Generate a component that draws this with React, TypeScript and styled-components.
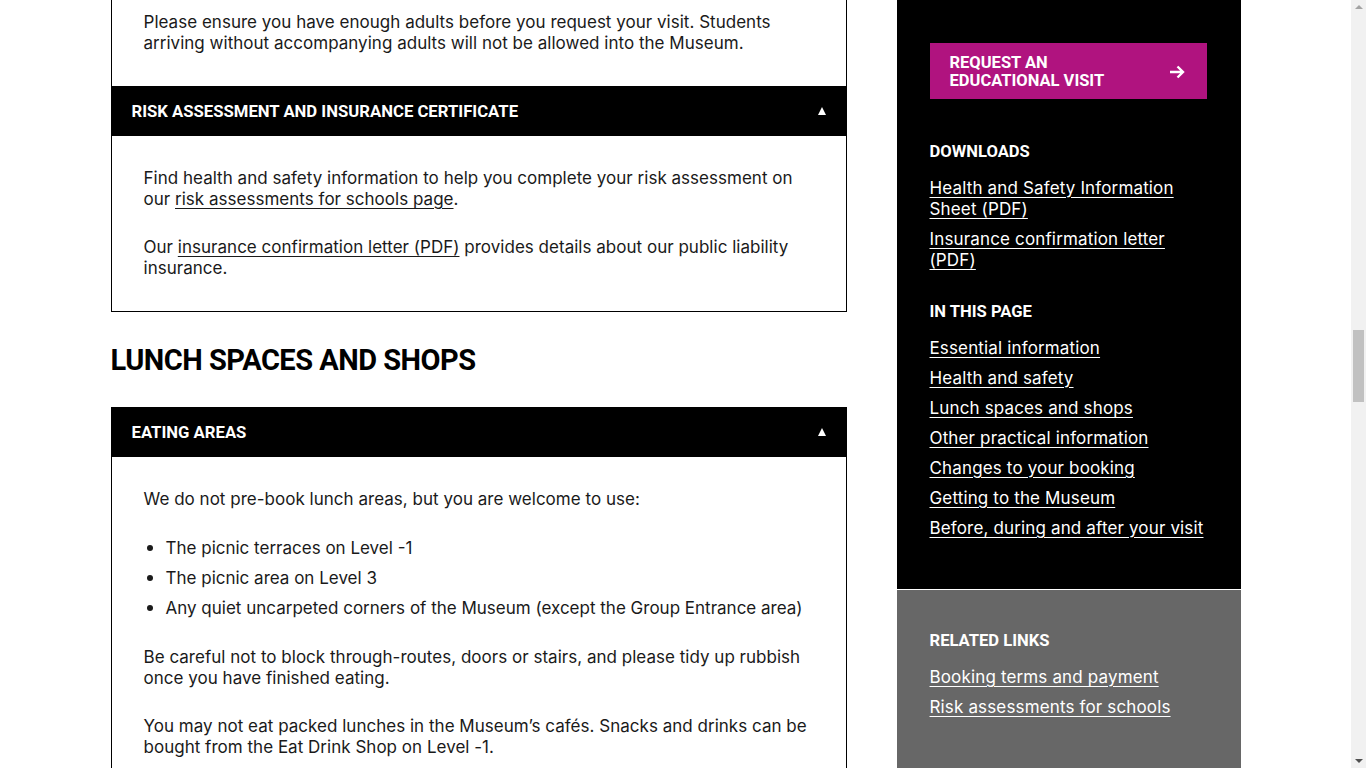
import styled, { createGlobalStyle } from 'styled-components';

const GlobalStyle = createGlobalStyle`
  body {
    margin: 0;
    padding-right: 15px;
    background: #fff;
    color: #1a1a1a;
    font-family: Inter, 'Noto Sans', 'Liberation Sans', sans-serif;
  }
  * {
    box-sizing: border-box;
  }
`;

const downloads = ['Health and Safety Information Sheet (PDF)', 'Insurance confirmation letter (PDF)'];

const pageLinks = [
  'Essential information',
  'Health and safety',
  'Lunch spaces and shops',
  'Other practical information',
  'Changes to your booking',
  'Getting to the Museum',
  'Before, during and after your visit',
];

const relatedLinks = ['Booking terms and payment', 'Risk assessments for schools'];

const lunchSpots = [
  'The picnic terraces on Level -1',
  'The picnic area on Level 3',
  'Any quiet uncarpeted corners of the Museum (except the Group Entrance area)',
];

export default function App() {
  return (
    <>
      <GlobalStyle />
      <StyledPage>
        <StyledMain>
          <StyledAccordion>
            <StyledPanel $cut>
              <StyledText>
                Please ensure you have enough adults before you request your visit. Students
                arriving without accompanying adults will not be allowed into the Museum.
              </StyledText>
            </StyledPanel>
            <AccordionHeader title="Risk assessment and insurance certificate" />
            <StyledPanel>
              <StyledText>
                Find health and safety information to help you complete your risk assessment on
                our <StyledInlineLink href="#">risk assessments for schools page</StyledInlineLink>.
              </StyledText>
              <StyledText>
                Our <StyledInlineLink href="#">insurance confirmation letter (PDF)</StyledInlineLink>{' '}
                provides details about our public liability insurance.
              </StyledText>
            </StyledPanel>
          </StyledAccordion>

          <StyledSectionTitle>Lunch spaces and shops</StyledSectionTitle>

          <StyledAccordion>
            <AccordionHeader title="Eating areas" />
            <StyledPanel>
              <StyledText>We do not pre-book lunch areas, but you are welcome to use:</StyledText>
              <StyledList>
                {lunchSpots.map((spot) => (
                  <li key={spot}>{spot}</li>
                ))}
              </StyledList>
              <StyledText>
                Be careful not to block through-routes, doors or stairs, and please tidy up rubbish
                once you have finished eating.
              </StyledText>
              <StyledText>
                You may not eat packed lunches in the Museum’s cafés. Snacks and drinks can be
                bought from the Eat Drink Shop on Level -1.
              </StyledText>
              <StyledText>
                The Museum shops are open to school groups with supervising adults.
              </StyledText>
            </StyledPanel>
          </StyledAccordion>
        </StyledMain>

        <StyledAside>
          <StyledDarkBlock>
            <StyledCta href="#">
              <span>
                Request an
                <br />
                educational visit
              </span>
              <svg width="16" height="14" viewBox="0 0 16 14" fill="none" stroke="#fff" strokeWidth="2.4">
                <path d="M1 7h13M8.5 1.5 14 7l-5.5 5.5" />
              </svg>
            </StyledCta>

            <StyledAsideTitle>Downloads</StyledAsideTitle>
            <StyledLinkList>
              {downloads.map((item) => (
                <li key={item}>
                  <StyledAsideLink href="#">{item}</StyledAsideLink>
                </li>
              ))}
            </StyledLinkList>

            <StyledAsideTitle>In this page</StyledAsideTitle>
            <StyledLinkList>
              {pageLinks.map((item) => (
                <li key={item}>
                  <StyledAsideLink href="#">{item}</StyledAsideLink>
                </li>
              ))}
            </StyledLinkList>
          </StyledDarkBlock>

          <StyledGreyBlock>
            <StyledAsideTitle>Related links</StyledAsideTitle>
            <StyledLinkList>
              {relatedLinks.map((item) => (
                <li key={item}>
                  <StyledAsideLink href="#">{item}</StyledAsideLink>
                </li>
              ))}
            </StyledLinkList>
          </StyledGreyBlock>
        </StyledAside>
      </StyledPage>

      <StyledScrollTrack aria-hidden>
        <StyledScrollArrow $dir="up" />
        <StyledScrollThumb />
        <StyledScrollArrow $dir="down" />
      </StyledScrollTrack>
    </>
  );
}

function AccordionHeader({ title }: { title: string }) {
  return (
    <StyledAccordionHeader type="button">
      <span>{title}</span>
      <StyledCaret aria-hidden />
    </StyledAccordionHeader>
  );
}

const StyledPage = styled.div`
  display: grid;
  grid-template-columns: 736px 344px;
  column-gap: 50px;
  width: 1130px;
  margin: 0 auto;
  align-items: start;
`;

const StyledMain = styled.main`
  display: flex;
  flex-direction: column;
  padding-bottom: 80px;
`;

const StyledAccordion = styled.div`
  border: 1px solid #000;
  border-top: none;
`;

const StyledPanel = styled.div<{ $cut?: boolean }>`
  padding: ${({ $cut }) => ($cut ? '12px 32px 32px' : '32px 32px 32px')};
`;

const StyledText = styled.p`
  margin: 0 0 27px;
  font-size: 17px;
  line-height: 21px;
  letter-spacing: 0.02px;

  &:last-child {
    margin-bottom: 0;
  }
`;

const StyledInlineLink = styled.a`
  color: inherit;
  text-decoration: underline;
  text-underline-offset: 3px;
`;

const StyledList = styled.ul`
  margin: 0 0 28px;
  padding: 0 0 0 22px;
  font-size: 17px;
  line-height: 21px;

  li {
    margin-bottom: 8px;
  }

  li::marker {
    font-size: 20px;
  }

  li:last-child {
    margin-bottom: 0;
  }
`;

const StyledAccordionHeader = styled.button`
  display: flex;
  align-items: center;
  justify-content: space-between;
  width: calc(100% + 2px);
  height: 50px;
  margin: 0 -1px;
  padding: 0 21px;
  border: none;
  background: #000;
  color: #fff;
  font-family: Roboto, 'Liberation Sans', sans-serif;
  font-weight: 700;
  font-size: 16.7px;
  text-transform: uppercase;
  text-align: left;
  cursor: pointer;
`;

const StyledCaret = styled.span`
  width: 0;
  height: 0;
  border-left: 4.5px solid transparent;
  border-right: 4.5px solid transparent;
  border-bottom: 8px solid #fff;
`;

const StyledSectionTitle = styled.h2`
  margin: 31px 0 30px;
  font-family: Roboto, 'Liberation Sans', sans-serif;
  font-weight: 700;
  font-size: 29px;
  line-height: 34px;
  color: #000;
  text-transform: uppercase;
  letter-spacing: -0.5px;
`;

const StyledAside = styled.aside`
  display: flex;
  flex-direction: column;
  row-gap: 1px;
  min-height: 800px;
`;

const StyledDarkBlock = styled.div`
  background: #000;
  color: #fff;
  padding: 43px 34px 50px 33px;
`;

const StyledGreyBlock = styled.div`
  flex: 1;
  background: #676767;
  color: #fff;
  padding: 41px 34px 40px 33px;
`;

const StyledCta = styled.a`
  display: flex;
  align-items: center;
  justify-content: space-between;
  height: 56px;
  margin-bottom: 43px;
  padding: 2px 22px 0 20px;
  background: #b0137f;
  color: #fff;
  text-decoration: none;
  font-family: Roboto, 'Liberation Sans', sans-serif;
  font-weight: 700;
  font-size: 16.5px;
  line-height: 18px;
  text-transform: uppercase;
`;

const StyledAsideTitle = styled.h3`
  margin: 0 0 16px;
  font-family: Roboto, 'Liberation Sans', sans-serif;
  font-weight: 700;
  font-size: 16.6px;
  line-height: 20px;
  text-transform: uppercase;
`;

const StyledLinkList = styled.ul`
  list-style: none;
  margin: 0 0 31px;
  padding: 0;
  font-size: 17px;
  line-height: 21px;

  li {
    margin-bottom: 9px;
  }

  li:last-child {
    margin-bottom: 0;
  }

  &:last-child {
    margin-bottom: 0;
  }
`;

const StyledAsideLink = styled.a`
  color: #fff;
  text-decoration: underline;
  text-underline-offset: 3px;
  letter-spacing: 0.15px;
`;

/* stand-in for the browser's vertical scrollbar seen in the screenshot */
const StyledScrollTrack = styled.div`
  position: fixed;
  top: 0;
  right: 0;
  bottom: 0;
  width: 15px;
  display: flex;
  flex-direction: column;
  justify-content: space-between;
  align-items: center;
  background: #f1f1f1;
`;

const StyledScrollThumb = styled.div`
  position: absolute;
  top: 330px;
  left: 2px;
  width: 11px;
  height: 72px;
  background: #c1c1c1;
`;

const StyledScrollArrow = styled.span<{ $dir: 'up' | 'down' }>`
  margin: 5px 0;
  width: 0;
  height: 0;
  border-left: 4px solid transparent;
  border-right: 4px solid transparent;
  ${({ $dir }) =>
    $dir === 'up' ? 'border-bottom: 4px solid #a3a3a3;' : 'border-top: 4px solid #505050;'}
`;
